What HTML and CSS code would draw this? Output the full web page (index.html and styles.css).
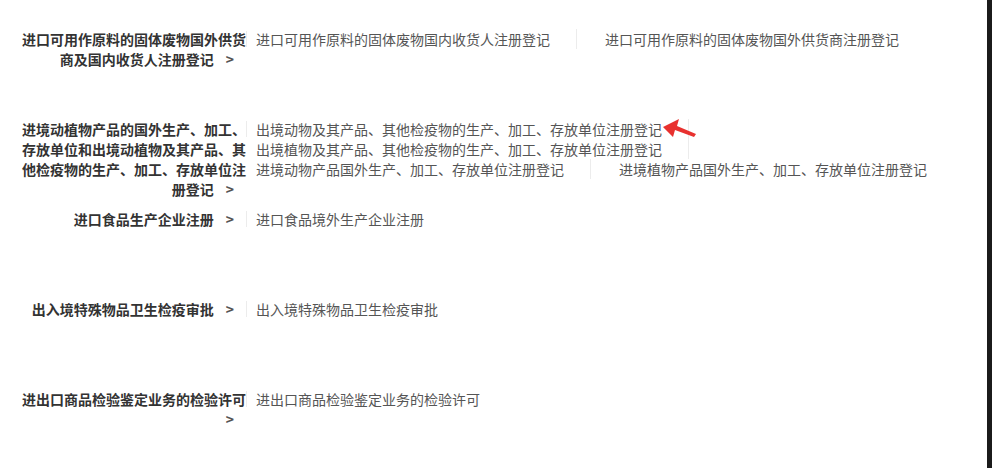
FILE: index.html
```html
<!DOCTYPE html>
<html lang="zh-CN">
<head>
  <meta charset="UTF-8">
  <meta name="viewport" content="width=device-width, initial-scale=1.0">
  <title>注册登记</title>
  <link rel="stylesheet" href="styles.css">
</head>
<body>
  <div class="list">
    <div class="row">
      <div class="label">进口可用作原料的固体废物国外供货商及国内收货人注册登记<span class="go">&gt;</span></div>
      <div class="sep"></div>
      <div class="items">
        <a class="item">进口可用作原料的固体废物国内收货人注册登记</a>
        <a class="item">进口可用作原料的固体废物国外供货商注册登记</a>
      </div>
    </div>
    <div class="row">
      <div class="label">进境动植物产品的国外生产、加工、存放单位和出境动植物及其产品、其他检疫物的生产、加工、存放单位注册登记<span class="go">&gt;</span></div>
      <div class="sep"></div>
      <div class="items">
        <a class="item">出境动物及其产品、其他检疫物的生产、加工、存放单位注册登记</a>
        <a class="item">出境植物及其产品、其他检疫物的生产、加工、存放单位注册登记</a>
        <a class="item">进境动物产品国外生产、加工、存放单位注册登记</a>
        <a class="item">进境植物产品国外生产、加工、存放单位注册登记</a>
      </div>
    </div>
    <div class="row">
      <div class="label">进口食品生产企业注册<span class="go">&gt;</span></div>
      <div class="sep"></div>
      <div class="items">
        <a class="item">进口食品境外生产企业注册</a>
      </div>
    </div>
    <div class="row">
      <div class="label">出入境特殊物品卫生检疫审批<span class="go">&gt;</span></div>
      <div class="sep"></div>
      <div class="items">
        <a class="item">出入境特殊物品卫生检疫审批</a>
      </div>
    </div>
    <div class="row">
      <div class="label">进出口商品检验鉴定业务的检验许可<span class="go">&gt;</span></div>
      <div class="sep"></div>
      <div class="items">
        <a class="item">进出口商品检验鉴定业务的检验许可</a>
      </div>
    </div>
  </div>

  <!-- red pointer drawn over the screenshot -->
  <svg class="pointer" width="40" height="24" viewBox="0 0 40 24">
    <polygon points="1,9 17,1 15,8 34,16 32,19 13,12 11,19" fill="#e8312f"/>
  </svg>

  <div class="edge"></div>
</body>
</html>
```
FILE: styles.css
```css
body {
  margin: 0;
  background: #fff;
  font-family: "Noto Sans CJK SC", "Noto Sans", sans-serif;
  font-size: 14px;
  line-height: 20px;
  position: relative;
  height: 468px;
  overflow: hidden;
}

.list {
  padding: 29px 0 0 20px;
}

.row {
  display: flex;
  min-height: 90px;
}

.label {
  width: 226px;
  flex-shrink: 0;
  text-align: right;
  font-weight: bold;
  color: #333;
}

.go {
  display: inline-block;
  margin: 0 12px 0 12px;
  color: #555;
}

.sep {
  width: 1px;
  height: 16px;
  margin-top: 2px;
  background: #ececec;
  flex-shrink: 0;
}

.items {
  flex: 1;
  display: flex;
  flex-wrap: wrap;
  align-content: flex-start;
  padding-left: 9px;
}

.item {
  color: #555;
  padding-right: 26px;
  margin-right: 28px;
  border-right: 1px solid #ececec;
  white-space: nowrap;
  cursor: pointer;
}

.item:last-child {
  border-right: none;
  padding-right: 0;
  margin-right: 0;
}

.pointer {
  position: absolute;
  left: 662px;
  top: 118px;
}

.edge {
  position: absolute;
  right: 0;
  top: 0;
  width: 5px;
  height: 100%;
  background: #1b1b1b;
}
```
